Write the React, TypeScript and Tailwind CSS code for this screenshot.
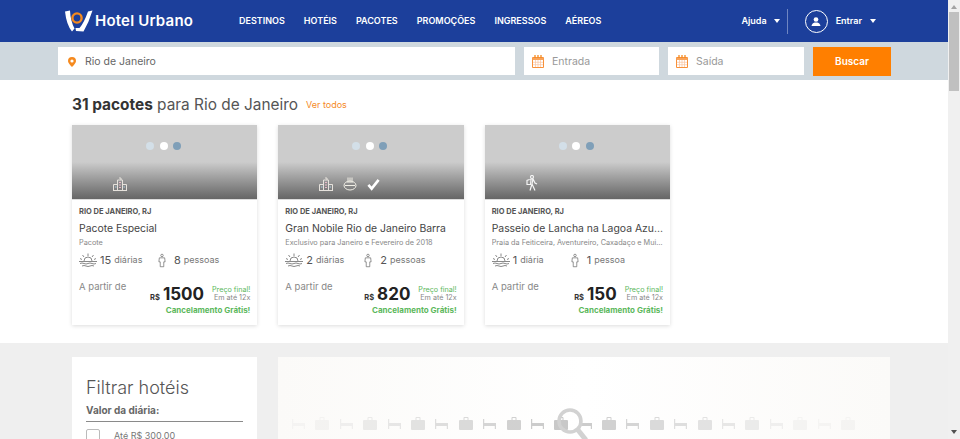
const NAV = ["DESTINOS", "HOTÉIS", "PACOTES", "PROMOÇÕES", "INGRESSOS", "AÉREOS"];

interface Deal {
  title: string;
  subtitle: string;
  nights: string;
  nightsLabel: string;
  people: string;
  peopleLabel: string;
  price: string;
  icons: string[];
}

const DEALS: Deal[] = [
  {
    title: "Pacote Especial",
    subtitle: "Pacote",
    nights: "15",
    nightsLabel: "diárias",
    people: "8",
    peopleLabel: "pessoas",
    price: "1500",
    icons: ["hotel"],
  },
  {
    title: "Gran Nobile Rio de Janeiro Barra",
    subtitle: "Exclusivo para Janeiro e Fevereiro de 2018",
    nights: "2",
    nightsLabel: "diárias",
    people: "2",
    peopleLabel: "pessoas",
    price: "820",
    icons: ["hotel", "food", "check"],
  },
  {
    title: "Passeio de Lancha na Lagoa Azul em Ilha Grande",
    subtitle: "Praia da Feiticeira, Aventureiro, Caxadaço e Muito Mais",
    nights: "1",
    nightsLabel: "diária",
    people: "1",
    peopleLabel: "pessoa",
    price: "150",
    icons: ["walker"],
  },
];

function Logo() {
  return (
    <svg width="28" height="22" viewBox="0 0 28 22" fill="none">
      <path d="M0 1.5 L5 0.5 Q5.5 11 9.5 18.5 L7 21.5 Q1.5 15 0 1.5Z" fill="#fff" />
      <path d="M18.5 21.5 Q24 12 27.5 0.5 L23 1.5 Q19 13 14.5 18 L10.5 18 L11 21Z" fill="#fff" />
      <circle cx="12" cy="8" r="4.6" stroke="#f58a1f" strokeWidth="2.4" />
    </svg>
  );
}

function UserCircle() {
  return (
    <span className="flex h-[23px] w-[23px] items-center justify-center rounded-full border border-white">
      <svg width="10" height="9" viewBox="0 0 11 10" fill="#fff">
        <circle cx="5.5" cy="2.8" r="2.6" />
        <path d="M0.5 10 Q1 6.5 4 6 L7 6 Q10 6.5 10.5 10Z" />
      </svg>
    </span>
  );
}

function Caret({ className }: { className?: string }) {
  return <span className={`h-0 w-0 border-x-[3px] border-t-[4px] border-x-transparent border-t-white ${className ?? ""}`} />;
}

function Pin() {
  return (
    <svg width="8" height="10" viewBox="0 0 8 10" fill="#f58a1f">
      <path d="M4 0 A4 4 0 0 1 8 4 Q8 6 4 10 Q0 6 0 4 A4 4 0 0 1 4 0Z M4 2.4 A1.6 1.6 0 1 0 4 5.6 A1.6 1.6 0 1 0 4 2.4Z" fillRule="evenodd" />
    </svg>
  );
}

function CalendarIcon() {
  return (
    <svg width="12" height="13" viewBox="0 0 12 13" fill="none">
      <path d="M0.5 2.5 H11.5 V12.5 H0.5Z" stroke="#f8913a" />
      <path d="M0.5 3 H11.5 V5 H0.5Z" fill="#f8a35a" />
      <path d="M3 0 V3 M6 0 V3 M9 0 V3" stroke="#f58a1f" strokeWidth="1.3" />
      <path d="M3.5 5 V12 M6 5 V12 M8.5 5 V12 M1 7.3 H11 M1 9.7 H11" stroke="#f9c4a0" strokeWidth="0.7" />
    </svg>
  );
}

function SunsetIcon() {
  return (
    <svg width="18" height="15" viewBox="0 0 18 15" fill="none" stroke="#6b6b6b" strokeWidth="0.8">
      <path d="M5 8 A4 4 0 0 1 13 8" />
      <path d="M9 0.5 V3 M3.5 2 L5 4 M14.5 2 L13 4 M1 5.5 L3 6.5 M17 5.5 L15 6.5" />
      <path d="M0 8.5 H18 M1 10.5 Q3 9.5 5 10.5 T9 10.5 T13 10.5 T17 10.5 M3 13 Q5 12 7 13 T11 13 T15 13" />
    </svg>
  );
}

function PersonIcon() {
  return (
    <svg width="8" height="15" viewBox="0 0 9 15" fill="none" stroke="#6b6b6b" strokeWidth="0.8">
      <circle cx="4.5" cy="1.8" r="1.4" />
      <path d="M1.5 4.5 H7.5 L8 9 H6.5 V14.5 H2.5 V9 H1 Z" />
    </svg>
  );
}

function AmenityIcon({ kind }: { kind: string }) {
  if (kind === "check") {
    return (
      <svg width="13" height="13" viewBox="0 0 14 13" fill="none" stroke="#fff" strokeWidth="2.8">
        <path d="M1.5 7 L5 11 L12.5 1.5" />
      </svg>
    );
  }
  if (kind === "food") {
    return (
      <svg width="14" height="14" viewBox="0 0 14 14" fill="none" stroke="#f1efe6" strokeWidth="1">
        <path d="M5 0.5 V6 M7 0.5 V6 M9 0.5 V6" />
        <ellipse cx="7" cy="8.5" rx="6" ry="4.5" />
        <path d="M2 8.5 H12" />
      </svg>
    );
  }
  if (kind === "walker") {
    return (
      <svg width="12" height="16" viewBox="0 0 12 16" fill="none" stroke="#f4f4f4" strokeWidth="1.2">
        <circle cx="6" cy="2" r="1.5" />
        <path d="M3.5 4.5 L7 4 L9 8 L11 9 M7 4 L6 9 L9 15.5 M6 9 L4 15.5" />
        <path d="M3.5 4.5 L1 5.5 L1 9.5 L4.5 9.5 L5 5" />
      </svg>
    );
  }
  return (
    <svg width="14" height="14" viewBox="0 0 14 14" fill="none" stroke="#e6e2dc" strokeWidth="1">
      <path d="M4.5 13 V3 H9.5 V13 M6 1 H8 V3 M0.5 13 V7.5 H4.5 M9.5 7.5 H13.5 V13 M0 13.5 H14" />
      <path d="M6 5.5 H8 M6 8 H8 M6 10.5 H8" stroke="#e8b8c8" />
      <path d="M2 10 H3.5 M10.5 10 H12" stroke="#a9cbe0" />
    </svg>
  );
}

function DealCard({ deal }: { deal: Deal }) {
  return (
    <div className="w-[185.33px] bg-white shadow-[0_1px_4px_rgba(0,0,0,0.14)]">
      <div className="relative flex h-[74px] justify-center bg-gradient-to-b from-[#cccccc] from-50% to-[#666666]">
        <div className="mt-[17px] mr-[2px] flex h-2 gap-[5.5px]">
          <span className="h-2 w-2 rounded-full bg-[#d3dfe8]" />
          <span className="h-2 w-2 rounded-full bg-white" />
          <span className="h-2 w-2 rounded-full bg-[#7f9fb8]" />
        </div>
        <div className="absolute bottom-[8px] left-[41px] flex items-center gap-[10px]">
          {deal.icons.map((icon) => (
            <AmenityIcon key={icon} kind={icon} />
          ))}
        </div>
      </div>
      <div className="h-px bg-[#dddddd]" />
      <div className="h-[125px] px-[7px] pt-[7px]">
        <div className="text-[7.5px] leading-[10px] font-bold text-[#555]">RIO DE JANEIRO, RJ</div>
        <div className="mt-[5px] truncate text-[10.4px] leading-[14px] text-[#444]">{deal.title}</div>
        <div className="mt-[2px] truncate text-[7.3px] leading-[10px] text-[#888]">{deal.subtitle}</div>
        <div className="mt-[4px] flex h-[16px] items-center">
          <div className="flex w-[79px] items-center gap-[3px]">
            <SunsetIcon />
            <span className="text-[11px] text-[#555]">{deal.nights}</span>
            <span className="text-[9px] text-[#777]">{deal.nightsLabel}</span>
          </div>
          <div className="flex items-center gap-[8px]">
            <PersonIcon />
            <span className="flex items-center gap-[3px]">
              <span className="text-[11px] text-[#555]">{deal.people}</span>
              <span className="text-[9px] text-[#777]">{deal.peopleLabel}</span>
            </span>
          </div>
        </div>
        <div className="mt-[12px] flex items-start justify-between">
          <span className="text-[9.5px] leading-[14px] text-[#888]">A partir de</span>
          <div className="mt-[4px] flex items-center">
            <span className="mt-[8px] mr-[3px] text-[7.5px] font-bold text-[#333]">R$</span>
            <span className="text-[17px] leading-[20px] font-bold text-[#222]">{deal.price}</span>
            <div className="ml-[8px] flex flex-col items-end text-[7.2px] leading-[8px]">
              <span className="text-[#5cb85c]">Preço final!</span>
              <span className="text-[#888]">Em até 12x</span>
            </div>
          </div>
        </div>
        <div className="text-right text-[8px] leading-[12px] font-bold text-[#5cb85c]">Cancelamento Grátis!</div>
      </div>
    </div>
  );
}

function BedIcon({ opacity }: { opacity: number }) {
  return (
    <svg width="13" height="10" viewBox="0 0 13 10" fill="#c8c8c8" style={{ opacity }}>
      <path d="M0 0 H1.2 V4 H13 V10 H11.8 V7 H1.2 V10 H0Z" />
    </svg>
  );
}

function CaseIcon({ opacity }: { opacity: number }) {
  return (
    <svg width="14" height="13" viewBox="0 0 14 13" fill="#c8c8c8" style={{ opacity }}>
      <path d="M1 3 H4.5 V1 Q4.5 0 5.5 0 H8.5 Q9.5 0 9.5 1 V3 H13 Q14 3 14 4 V12 Q14 13 13 13 H1 Q0 13 0 12 V4 Q0 3 1 3Z M5.5 1 V3 H8.5 V1Z" />
    </svg>
  );
}

// Opacity of the strip peaks under the magnifier, then fades to both sides
const STRIP = Array.from({ length: 24 }, (_, i) => Math.max(0.12, 1 - Math.abs(i - 11) * 0.085));

export default function App() {
  return (
    <div className="flex h-[439px] w-[960px] overflow-hidden bg-white font-['Inter','Noto_Sans',sans-serif]">
      <div className="h-[439px] w-[948px] shrink-0 overflow-hidden">
        <header className="flex h-[42px] items-center bg-[#1c3f9b] pr-[72px] pl-[65px] text-white">
          <div className="flex w-[174px] items-center gap-[2px]">
            <Logo />
            <span className="text-[15px] font-semibold tracking-[0.2px] whitespace-nowrap">Hotel Urbano</span>
          </div>
          <nav className="mb-[1px] flex gap-[19px] text-[9px] font-semibold">
            {NAV.map((item) => (
              <span key={item}>{item}</span>
            ))}
          </nav>
          <div className="ml-auto flex items-center text-[9px] font-semibold">
            <span>Ajuda</span>
            <Caret className="ml-[7px]" />
            <span className="mr-[17px] ml-[7px] h-[25px] w-px bg-[#6f86c2]" />
            <UserCircle />
            <span className="ml-[8px]">Entrar</span>
            <Caret className="ml-[8px]" />
          </div>
        </header>

        <div className="flex h-[38px] items-center gap-[9px] bg-[#cfd8de] pl-[58px]">
          <div className="flex h-[28px] w-[457px] items-center bg-white pt-px pl-[10px] text-[10.5px] text-[#666]">
            <Pin />
            <span className="ml-[9px]">Rio de Janeiro</span>
          </div>
          <div className="flex h-[28px] w-[135px] items-center bg-white pt-px pl-[8px] text-[10.5px] text-[#999]">
            <CalendarIcon />
            <span className="ml-[8px]">Entrada</span>
          </div>
          <div className="flex h-[28px] w-[136px] items-center bg-white pt-px pl-[8px] text-[10.5px] text-[#999]">
            <CalendarIcon />
            <span className="ml-[8px]">Saída</span>
          </div>
          <button type="button" className="h-[29px] w-[78px] bg-[#ff7f00] text-[10px] font-semibold text-white">
            Buscar
          </button>
        </div>

        <section className="h-[263px] pt-[15px] pl-[72px]">
          <div className="flex h-[20px] items-center">
            <h2 className="text-[15.4px] text-[#555]">
              <span className="font-bold text-[#333]">31 pacotes</span> para Rio de Janeiro
            </h2>
            <span className="ml-[8px] text-[9px] text-[#f58a1f]">Ver todos</span>
          </div>
          <div className="mt-[10px] flex gap-[21px]">
            {DEALS.map((deal) => (
              <DealCard key={deal.title} deal={deal} />
            ))}
          </div>
        </section>

        <section className="flex h-[96px] gap-[21px] bg-[#efefef] pt-[14px] pl-[72px]">
          <div className="h-[82px] w-[185px] overflow-hidden bg-white px-[14px] pt-[20px]">
            <div className="text-[18px] leading-[22px] font-light text-[#555]">Filtrar hotéis</div>
            <div className="mt-[5px] border-b border-[#8a8a8a] pb-[5px] text-[10px] leading-[12px] font-bold text-[#666]">
              Valor da diária:
            </div>
            <div className="mt-[7px] flex items-center">
              <span className="h-[14px] w-[14px] shrink-0 rounded-[2px] border border-[#bbb]" />
              <span className="ml-[14px] text-[9px] text-[#777]">Até R$ 300,00</span>
            </div>
          </div>
          <div className="relative h-[82px] w-[612px] overflow-hidden bg-gradient-to-r from-[#fbfaf8] via-white to-[#fbfaf8]">
            <div className="absolute top-[60px] left-[14px] flex items-center gap-[10.4px]">
              {STRIP.map((opacity, i) =>
                i % 2 === 0 ? <BedIcon key={i} opacity={opacity} /> : <CaseIcon key={i} opacity={opacity} />,
              )}
            </div>
            <svg
              className="absolute top-[50px] left-[279px]"
              width="36"
              height="33"
              viewBox="0 0 36 33"
              fill="none"
              stroke="#d2d2d2"
            >
              <circle cx="13" cy="14" r="11" strokeWidth="3.5" />
              <path d="M21 23 L29 33" strokeWidth="5" />
            </svg>
          </div>
        </section>
      </div>

      <aside className="relative h-[439px] w-[12px] shrink-0 bg-[#f0f0f0]">
        <span className="absolute top-[5px] left-[3px] h-0 w-0 border-x-[3.5px] border-b-[4px] border-x-transparent border-b-[#a3a3a3]" />
        <span className="absolute top-[12px] left-[1px] h-[79px] w-[10px] bg-[#c0c0c0]" />
        <span className="absolute bottom-[5px] left-[3px] h-0 w-0 border-x-[3.5px] border-t-[4px] border-x-transparent border-t-[#505050]" />
      </aside>
    </div>
  );
}
